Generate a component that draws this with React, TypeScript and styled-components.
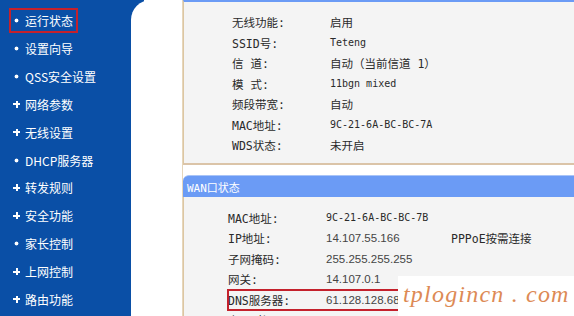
import React from 'react'
import styled, { createGlobalStyle, css } from 'styled-components'

const GlobalStyle = createGlobalStyle`
  html, body {
    margin: 0;
    padding: 0;
    background: #ffffff;
    overflow: hidden;
  }
`

const Page = styled.div`
  position: relative;
  display: flex;
  width: 574px;
  height: 316px;
  overflow: hidden;
  font-family: "DejaVu Sans Mono", "Noto Sans CJK SC", monospace;
`

const Sidebar = styled.div`
  display: flex;
  width: 183px;
  flex-shrink: 0;
  padding-left: 6px;
  box-sizing: border-box;
  background: linear-gradient(to right, #0a4fa6 0, #0a4fa6 144px, #ffffff 144px);
`

const Menu = styled.div`
  display: flex;
  flex-direction: column;
  width: 125px;
  padding-top: 7px;
  background: #0a4fa6;
`

const Gutter = styled.div`
  flex: 1;
  background: #ffffff;
  border-top-left-radius: 20px;
  border-right: 1px solid #e6d6bb;
`

const MenuItem = styled.div`
  display: flex;
  align-items: center;
  height: 27.85px;
  padding-left: 3px;
`

const MenuLabel = styled.span<{ $active?: boolean }>`
  display: inline-flex;
  align-items: center;
  height: 21px;
  padding: 0 3px 0 2px;
  border: 2px solid ${p => (p.$active ? '#c4212c' : 'transparent')};
  color: #ffffff;
  font-family: "Noto Sans CJK SC", sans-serif;
  font-size: 12px;
`

const Bullet = styled.span<{ $plus?: boolean }>`
  display: inline-block;
  width: 7px;
  height: 7px;
  margin-right: 5px;
  ${p =>
    p.$plus
      ? css`
          background:
            linear-gradient(#ffffff, #ffffff) center / 7px 2px no-repeat,
            linear-gradient(#ffffff, #ffffff) center / 2px 7px no-repeat;
        `
      : css`
          background: radial-gradient(circle at center, #ffffff 0, #ffffff 1.5px, rgba(255, 255, 255, 0) 2.3px);
        `}
`

const Content = styled.div`
  flex: 1;
  display: flex;
  flex-direction: column;
  background: #ffffff;
`

const InfoPanel = styled.div`
  background: #f4f4f4;
  border-top: 2px solid #6b9bf5;
  border-left: 1px solid #dcc6a2;
  border-bottom: 2px solid #dbc4a8;
  padding: 10px 0 7.5px 48px;
`

const WanPanel = styled.div`
  margin-top: 10px;
  display: flex;
  flex-direction: column;
`

const PanelHeader = styled.div`
  height: 21px;
  display: flex;
  align-items: center;
  padding-left: 4px;
  background: #6b9bf5;
  border-top: 1px solid #a9c4f7;
  border-top-left-radius: 6px;
  color: #ffffff;
  font-size: 11px;
`

const PanelBody = styled.div`
  background: #f4f4f4;
  border-left: 1px solid #dcc6a2;
  padding: 10.5px 0 0 44px;
  height: 200px;
`

const Row = styled.div<{ $highlight?: boolean }>`
  display: grid;
  grid-template-columns: 98px 125px 1fr;
  align-items: center;
  height: 20.5px;
  font-size: 10px;
  color: #2a2a2a;
  ${p =>
    p.$highlight &&
    css`
      outline: 2px solid #c4212c;
      outline-offset: -1px;
    `}
`

const Label = styled.span`
  font-size: 11.5px;
  white-space: nowrap;
`

const Value = styled.span<{ $sans?: boolean; $cjk?: boolean }>`
  white-space: nowrap;
  font-size: ${p => (p.$cjk ? '11.5px' : '10px')};
  ${p =>
    p.$sans &&
    css`
      font-family: "Liberation Sans", "Noto Sans CJK SC", sans-serif;
      font-size: 11.5px;
      color: #444;
    `}
`

const Watermark = styled.div`
  position: absolute;
  right: 0;
  bottom: 0;
  width: 176px;
  height: 40px;
  background: #ffffff;
  box-sizing: border-box;
  padding-left: 5px;
  color: #dd8a55;
  font-family: "Liberation Serif", "DejaVu Serif", serif;
  font-style: italic;
  font-size: 24px;
  line-height: 36px;
  letter-spacing: 1.2px;
  white-space: nowrap;
`

const menuItems = [
  { text: '运行状态', plus: false, active: true },
  { text: '设置向导', plus: false },
  { text: 'QSS安全设置', plus: false },
  { text: '网络参数', plus: true },
  { text: '无线设置', plus: true },
  { text: 'DHCP服务器', plus: false },
  { text: '转发规则', plus: true },
  { text: '安全功能', plus: true },
  { text: '家长控制', plus: false },
  { text: '上网控制', plus: true },
  { text: '路由功能', plus: true },
]

const wireless = [
  { label: '无线功能:', value: '启用', cjk: true },
  { label: 'SSID号:', value: 'Teteng' },
  { label: '信 道:', value: '自动（当前信道 1）', cjk: true },
  { label: '模 式:', value: '11bgn mixed' },
  { label: '频段带宽:', value: '自动', cjk: true },
  { label: 'MAC地址:', value: '9C-21-6A-BC-BC-7A' },
  { label: 'WDS状态:', value: '未开启', cjk: true },
]

export default function App() {
  return (
    <>
      <GlobalStyle />
      <Page>
        <Sidebar>
          <Menu>
            {menuItems.map(item => (
              <MenuItem key={item.text}>
                <MenuLabel $active={item.active}>
                  <Bullet $plus={item.plus} />
                  {item.text}
                </MenuLabel>
              </MenuItem>
            ))}
          </Menu>
          <Gutter />
        </Sidebar>
        <Content>
          <InfoPanel>
            {wireless.map(row => (
              <Row key={row.label}>
                <Label>{row.label}</Label>
                <Value $cjk={row.cjk}>{row.value}</Value>
              </Row>
            ))}
          </InfoPanel>
          <WanPanel>
            <PanelHeader>WAN口状态</PanelHeader>
            <PanelBody>
              <Row>
                <Label>MAC地址:</Label>
                <Value>9C-21-6A-BC-BC-7B</Value>
              </Row>
              <Row>
                <Label>IP地址:</Label>
                <Value $sans>14.107.55.166</Value>
                <Value $cjk>PPPoE按需连接</Value>
              </Row>
              <Row>
                <Label>子网掩码:</Label>
                <Value $sans>255.255.255.255</Value>
              </Row>
              <Row>
                <Label>网关:</Label>
                <Value $sans>14.107.0.1</Value>
              </Row>
              <Row $highlight>
                <Label>DNS服务器:</Label>
                <Value $sans>61.128.128.68</Value>
              </Row>
              <Row>
                <Label>上网时间:</Label>
                <Value>0 day(s) 00:12:36</Value>
              </Row>
            </PanelBody>
          </WanPanel>
        </Content>
        <Watermark>tplogincn . com</Watermark>
      </Page>
    </>
  )
}
